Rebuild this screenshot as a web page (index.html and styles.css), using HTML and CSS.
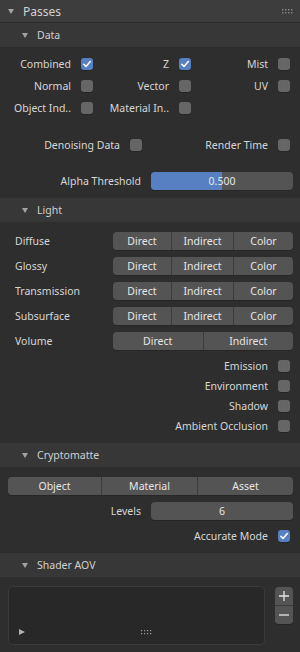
FILE: index.html
```html
<!DOCTYPE html>
<html lang="en">
<head>
    <meta charset="UTF-8">
    <meta name="viewport" content="width=device-width, initial-scale=1.0">
    <title>Passes</title>
    <link rel="stylesheet" href="styles.css">
</head>
<body>
    <div class="panel-head">
        <svg class="tri" width="6" height="5" viewBox="0 0 6 5"><polygon points="0,0 6,0 3,5"/></svg>
        <span>Passes</span>
        <svg class="grip" width="11" height="5" viewBox="0 0 11 5">
            <rect x="0" y="0" width="1.4" height="1.4"/><rect x="3" y="0" width="1.4" height="1.4"/><rect x="6" y="0" width="1.4" height="1.4"/><rect x="9" y="0" width="1.4" height="1.4"/>
            <rect x="0" y="3" width="1.4" height="1.4"/><rect x="3" y="3" width="1.4" height="1.4"/><rect x="6" y="3" width="1.4" height="1.4"/><rect x="9" y="3" width="1.4" height="1.4"/>
        </svg>
    </div>

    <!-- Data -->
    <div class="sub-head">
        <svg class="tri" width="6" height="5" viewBox="0 0 6 5"><polygon points="0,0 6,0 3,5"/></svg>
        <span>Data</span>
    </div>
    <div class="sub-body data-body">
        <div class="check-grid three">
            <div class="check"><span>Combined</span><i class="box on"><svg viewBox="0 0 12 12"><path d="M2.8 6.3 L5 8.4 L9.3 3.6"/></svg></i></div>
            <div class="check"><span>Z</span><i class="box on"><svg viewBox="0 0 12 12"><path d="M2.8 6.3 L5 8.4 L9.3 3.6"/></svg></i></div>
            <div class="check"><span>Mist</span><i class="box"></i></div>
            <div class="check"><span>Normal</span><i class="box"></i></div>
            <div class="check"><span>Vector</span><i class="box"></i></div>
            <div class="check"><span>UV</span><i class="box"></i></div>
            <div class="check"><span>Object Ind..</span><i class="box"></i></div>
            <div class="check"><span>Material In..</span><i class="box"></i></div>
        </div>
        <div class="check-grid two">
            <div class="check"><span>Denoising Data</span><i class="box"></i></div>
            <div class="check"><span>Render Time</span><i class="box"></i></div>
        </div>
        <div class="field-row alpha-row">
            <span class="field-label">Alpha Threshold</span>
            <div class="slider">
                <div class="slider-fill" style="width: 50%"></div>
                <span class="slider-value">0.500</span>
            </div>
        </div>
    </div>

    <!-- Light -->
    <div class="sub-head">
        <svg class="tri" width="6" height="5" viewBox="0 0 6 5"><polygon points="0,0 6,0 3,5"/></svg>
        <span>Light</span>
    </div>
    <div class="sub-body light-body">
        <div class="prop-row">
            <span class="prop-label">Diffuse</span>
            <div class="seg seg3"><span>Direct</span><span>Indirect</span><span>Color</span></div>
        </div>
        <div class="prop-row">
            <span class="prop-label">Glossy</span>
            <div class="seg seg3"><span>Direct</span><span>Indirect</span><span>Color</span></div>
        </div>
        <div class="prop-row">
            <span class="prop-label">Transmission</span>
            <div class="seg seg3"><span>Direct</span><span>Indirect</span><span>Color</span></div>
        </div>
        <div class="prop-row">
            <span class="prop-label">Subsurface</span>
            <div class="seg seg3"><span>Direct</span><span>Indirect</span><span>Color</span></div>
        </div>
        <div class="prop-row">
            <span class="prop-label">Volume</span>
            <div class="seg seg2"><span>Direct</span><span>Indirect</span></div>
        </div>
        <div class="check-list">
            <div class="check"><span>Emission</span><i class="box"></i></div>
            <div class="check"><span>Environment</span><i class="box"></i></div>
            <div class="check"><span>Shadow</span><i class="box"></i></div>
            <div class="check"><span>Ambient Occlusion</span><i class="box"></i></div>
        </div>
    </div>

    <!-- Cryptomatte -->
    <div class="sub-head">
        <svg class="tri" width="6" height="5" viewBox="0 0 6 5"><polygon points="0,0 6,0 3,5"/></svg>
        <span>Cryptomatte</span>
    </div>
    <div class="sub-body crypto-body">
        <div class="seg seg-crypto"><span>Object</span><span>Material</span><span>Asset</span></div>
        <div class="field-row levels-row">
            <span class="field-label">Levels</span>
            <div class="slider"><span class="slider-value">6</span></div>
        </div>
        <div class="check accurate">
            <span>Accurate Mode</span>
            <i class="box on"><svg viewBox="0 0 12 12"><path d="M2.8 6.3 L5 8.4 L9.3 3.6"/></svg></i>
        </div>
    </div>

    <!-- Shader AOV -->
    <div class="sub-head">
        <svg class="tri" width="6" height="5" viewBox="0 0 6 5"><polygon points="0,0 6,0 3,5"/></svg>
        <span>Shader AOV</span>
    </div>
    <div class="sub-body aov-body">
        <div class="list-box">
            <div class="list-foot">
                <svg class="play" width="6" height="6" viewBox="0 0 6 6"><polygon points="0,0 6,3 0,6"/></svg>
                <svg class="list-grip" width="11" height="5" viewBox="0 0 11 5">
                    <rect x="0" y="0" width="1.2" height="1.2"/><rect x="3" y="0" width="1.2" height="1.2"/><rect x="6" y="0" width="1.2" height="1.2"/><rect x="9" y="0" width="1.2" height="1.2"/>
                    <rect x="0" y="3" width="1.2" height="1.2"/><rect x="3" y="3" width="1.2" height="1.2"/><rect x="6" y="3" width="1.2" height="1.2"/><rect x="9" y="3" width="1.2" height="1.2"/>
                </svg>
            </div>
        </div>
        <div class="list-tools">
            <div class="tool plus"><svg width="18" height="18" viewBox="0 0 18 18"><path d="M9 4 V14 M4 9 H14"/></svg></div>
            <div class="tool minus"><svg width="18" height="18" viewBox="0 0 18 18"><path d="M4 9 H14"/></svg></div>
        </div>
    </div>
</body>
</html>
```

FILE: styles.css
```css
body {
    margin: 0;
    width: 300px;
    height: 652px;
    overflow: hidden;
    background-color: #2e2e2e;
    font-family: "Noto Sans", "DejaVu Sans", sans-serif;
    font-size: 10.5px;
    color: #d6d6d6;
}

.tri {
    fill: #a3a3a3;
    flex: none;
}

/* headers */
.panel-head {
    height: 22px;
    background-color: #3d3d3d;
    border-bottom: 1px solid #2b2b2b;
    display: flex;
    align-items: center;
    padding-left: 8px;
    font-size: 12px;
    color: #d0d0d0;
}

.panel-head .tri {
    margin-right: 9px;
}

.grip {
    margin-left: auto;
    margin-right: 7px;
    fill: #8c8c8c;
}

.sub-head {
    height: 24px;
    background-color: #373737;
    display: flex;
    align-items: center;
    padding-left: 22px;
    font-size: 10.5px;
    color: #d0d0d0;
}

.sub-head .tri {
    margin-right: 9px;
}

/* checkboxes */
.check {
    display: flex;
    align-items: center;
    justify-content: flex-end;
    gap: 10px;
    white-space: nowrap;
}

.box {
    width: 12px;
    height: 12px;
    border-radius: 3px;
    background-color: #666666;
    box-shadow: 0 1px 0 #262626;
    flex: none;
}

.box.on {
    background-color: #5680c2;
}

.box svg {
    display: block;
    width: 12px;
    height: 12px;
    fill: none;
    stroke: #ffffff;
    stroke-width: 1.5;
    stroke-linecap: round;
    stroke-linejoin: round;
}

/* Data */
.data-body {
    padding: 6px 7px 6px 0;
}

.check-grid {
    display: grid;
    grid-auto-rows: 22px;
}

.check-grid .check {
    padding-right: 2px;
}

.check-grid.three {
    grid-template-columns: 95px 98px 99px;
}

.check-grid.two {
    grid-template-columns: 144px 148px;
    margin-top: 15px;
}

.field-row {
    display: flex;
    align-items: center;
    height: 18px;
}

.alpha-row {
    margin-top: 16px;
    margin-bottom: 2px;
}

.field-label {
    width: 151px;
    padding-right: 10px;
    box-sizing: border-box;
    text-align: right;
    flex: none;
}

.slider {
    flex: 1;
    height: 18px;
    position: relative;
    background-color: #545454;
    border-radius: 4px;
    overflow: hidden;
    box-shadow: 0 1px 0 #262626;
    display: flex;
    align-items: center;
    justify-content: center;
    color: #e6e6e6;
}

.slider-fill {
    position: absolute;
    left: 0;
    top: 0;
    bottom: 0;
    background-color: #5680c2;
}

.slider-value {
    position: relative;
}

/* Light */
.light-body {
    padding: 10px 7px 7px 0;
}

.prop-row {
    display: flex;
    align-items: center;
    height: 18px;
    padding-left: 15px;
    margin-bottom: 7px;
}

.prop-row:nth-child(5) {
    margin-bottom: 6px;
}

.prop-label {
    width: 98px;
    flex: none;
}

.seg {
    flex: 1;
    display: flex;
    height: 18px;
    border-radius: 4px;
    overflow: hidden;
    box-shadow: 0 1px 0 #262626;
}

.seg span {
    background-color: #545454;
    color: #e6e6e6;
    display: flex;
    align-items: center;
    justify-content: center;
}

.seg span + span {
    border-left: 1px solid #3b3b3b;
}

.seg3 span:nth-child(1) { width: 58px; }
.seg3 span:nth-child(2) { width: 61px; }
.seg3 span:nth-child(3) { flex: 1; }

.seg2 span { flex: 1; }

.check-list .check {
    height: 20px;
    padding-right: 3px;
}

/* Cryptomatte */
.crypto-body {
    padding: 10px 7px 7px 8px;
}

.seg-crypto span:nth-child(1) { width: 93px; }
.seg-crypto span:nth-child(2) { width: 95px; }
.seg-crypto span:nth-child(3) { flex: 1; }

.levels-row {
    margin-top: 7px;
}

.levels-row .field-label {
    width: 143px;
}

.accurate {
    height: 20px;
    margin-top: 6px;
    padding-right: 3px;
}

/* Shader AOV */
.aov-body {
    padding: 9px 7px 0 8px;
    display: flex;
    gap: 10px;
}

.list-box {
    flex: 1;
    height: 59px;
    box-sizing: border-box;
    background-color: #282828;
    border: 1px solid #3a3a3a;
    border-radius: 5px;
    display: flex;
    align-items: flex-end;
}

.list-foot {
    width: 100%;
    height: 12px;
    margin-bottom: 6px;
    display: flex;
    align-items: center;
    padding-left: 10px;
}

.play {
    fill: #b0b0b0;
}

.list-grip {
    margin-left: 116px;
    fill: #9a9a9a;
}

.list-tools {
    width: 18px;
    padding-top: 1px;
}

.tool {
    height: 18px;
    background-color: #545454;
}

.tool svg {
    display: block;
    fill: none;
    stroke: #e6e6e6;
    stroke-width: 1.3;
}

.plus {
    border-radius: 4px 4px 0 0;
    border-bottom: 1px solid #3b3b3b;
}

.minus {
    border-radius: 0 0 4px 4px;
    box-shadow: 0 1px 0 #262626;
}
```
